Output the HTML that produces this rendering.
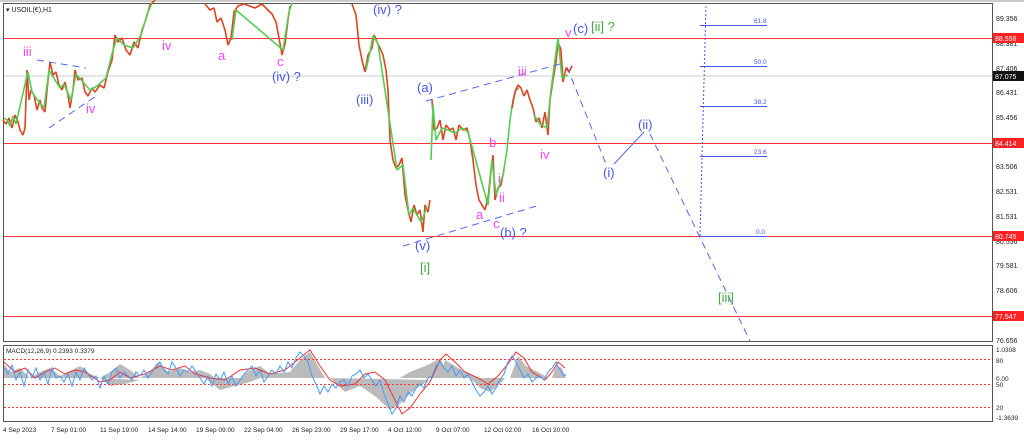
<!DOCTYPE html>
<html><head><meta charset="utf-8"><style>
html,body{margin:0;padding:0;background:#fff;width:1024px;height:441px;overflow:hidden}
svg{display:block;font-family:"Liberation Sans",sans-serif}
</style></head><body>
<svg width="1024" height="441" viewBox="0 0 1024 441">
<rect x="0" y="0" width="1024" height="441" fill="#fff"/>
<rect x="3.5" y="3.5" width="989" height="338" fill="#fff" stroke="#555" stroke-width="1"/>
<rect x="3.5" y="345.5" width="989" height="76" fill="#fff" stroke="#555" stroke-width="1"/>
<line x1="0" y1="1" x2="1024" y2="1" stroke="#999"/>
<line x1="4" y1="76" x2="992" y2="76" stroke="#ccc"/>
<g stroke="#f33" stroke-width="1">
<line x1="4" y1="38.5" x2="992" y2="38.5"/>
<line x1="4" y1="143.5" x2="992" y2="143.5"/>
<line x1="4" y1="236.5" x2="992" y2="236.5"/>
<line x1="4" y1="316.5" x2="992" y2="316.5"/>
</g>
<g stroke="#4455ee" stroke-width="1">
<line x1="700" y1="25.5" x2="767" y2="25.5"/>
<line x1="700" y1="66.5" x2="767" y2="66.5"/>
<line x1="700" y1="106.5" x2="767" y2="106.5"/>
<line x1="700" y1="156.5" x2="767" y2="156.5"/>
<line x1="700" y1="236.5" x2="767" y2="236.5"/>
<polyline points="700,236 706,4" fill="none" stroke-dasharray="2,2"/>
</g>
<g font-size="6.5" fill="#4455ee">
<text x="754" y="23">61.8</text><text x="754" y="64">50.0</text><text x="754" y="104">38.2</text><text x="754" y="154">23.6</text><text x="756" y="234">0.0</text>
</g>
<g fill="none" stroke-width="1.6" stroke-linejoin="bevel">
<polyline stroke="#d42" points="3,120 6,124 9,118 12,128 15,115 18,122 20,130 23,135 25,128 27,70 29,100 31,90 34,95 37,110 40,100 42,108 45,112 48,80 50,62 53,75 56,72 59,85 62,90 65,82 68,95 70,108 73,90 75,70 78,80 82,78 85,92 88,96 92,88 95,92 100,85 104,88 108,72 112,60 115,35 118,42 122,38 126,50 130,55 134,42 138,48 142,30 145,22 150,5 155,0"/>
<polyline stroke="#5c5" points="4,118 7,120 10,126 13,116 16,124 26,80 28,72 32,92 36,98 44,108 49,70 55,80 60,88 64,84 71,100 76,74 83,82 90,90 97,86 106,78 113,50 117,38 124,45 133,48 141,35 148,12 152,3"/>
<polyline stroke="#d42" points="205,4 210,10 214,8 217,22 221,18 225,30 228,45 231,38 234,12 238,6 244,4 255,8 262,4 268,10 272,14 276,22 279,38 282,55 285,44 288,20 290,6"/>
<polyline stroke="#5c5" points="232,40 236,10 283,50 289,12 292,3"/>
<polyline stroke="#d42" points="352,4 356,15 359,45 362,60 365,72 368,55 372,48 374,35 377,42 380,48 383,55 386,70 388,90 390,140 393,160 396,168 399,165 402,158 405,195 408,210 411,222 414,205 417,215 420,210 423,232 425,205 428,212 430,200"/>
<polyline stroke="#5c5" points="366,70 370,52 373,36 378,44 397,170 403,165 409,215 413,208 421,222 424,215 427,206"/>
<polyline stroke="#d42" points="432,100 434,130 437,128 440,120 443,140 446,125 450,130 453,128 456,140 459,125 463,130 467,128 470,140 473,160 476,185 479,200 482,205 485,210 488,198 491,170 493,155 495,200 498,188 501,185 504,170"/>
<polyline stroke="#5c5" points="431,160 433,105 436,140 442,128 448,130 455,133 462,128 468,132 488,205 492,160 496,195 503,175 507,150 510,120 513,100 516,90 519,88"/>
<polyline stroke="#d42" points="512,108 515,92 518,85 521,88 524,96 527,90 530,100 533,108 536,122 539,118 542,128 545,112 548,135 550,100 553,80 556,62 558,42 561,50 563,82 566,68 569,72 572,66"/>
<polyline stroke="#5c5" points="534,115 540,124 547,128 551,90 555,60 558,38 562,78 568,75"/>
</g>
<g stroke="#5566ee" stroke-width="1" fill="none" stroke-dasharray="7,5">
<line x1="37" y1="60" x2="86" y2="68"/>
<line x1="49" y1="128" x2="96" y2="96"/>
<line x1="426" y1="101" x2="560" y2="64"/>
<line x1="403" y1="246" x2="540" y2="205"/>
<polyline points="567,67 606,164"/>
<polyline points="614,164 644,132" stroke-dasharray="none"/>
<polyline points="650,134 750,341"/>
</g>
<g font-size="13">
<text x="23" y="56" fill="#f4f">iii</text>
<text x="86" y="113" fill="#f4f">iv</text>
<text x="162" y="50" fill="#f4f">iv</text>
<text x="218" y="60" fill="#f4f">a</text>
<text x="277" y="66" fill="#f4f">c</text>
<text x="272" y="81" fill="#4455ee">(iv) ?</text>
<text x="373" y="14" fill="#4455ee">(iv) ?</text>
<text x="356" y="104" fill="#4455ee">(iii)</text>
<text x="417" y="92" fill="#4455ee">(a)</text>
<text x="518" y="76" fill="#f4f">iii</text>
<text x="489" y="147" fill="#f4f">b</text>
<text x="498" y="183" fill="#f4f">i</text>
<text x="499" y="202" fill="#f4f">ii</text>
<text x="476" y="219" fill="#f4f">a</text>
<text x="493" y="228" fill="#f4f">c</text>
<text x="500" y="237" fill="#4455ee">(b) ?</text>
<text x="415" y="250" fill="#4455ee">(v)</text>
<text x="420" y="272" fill="#4a4">[i]</text>
<text x="540" y="159" fill="#f4f">iv</text>
<text x="565" y="37" fill="#f4f">v</text>
<text x="573" y="33" fill="#4455ee">(c)</text>
<text x="591" y="31" fill="#4a4">[ii] ?</text>
<text x="603" y="177" fill="#4455ee">(i)</text>
<text x="638" y="129" fill="#4455ee">(ii)</text>
<text x="718" y="302" fill="#4a4">[iii]</text>
</g>
<text x="6" y="12" font-size="7" fill="#222">▾ USOIL(€),H1</text>
<g font-size="7" fill="#222">
<text x="996" y="21">89.356</text><text x="996" y="46">88.381</text><text x="996" y="71">87.406</text><text x="996" y="95">86.431</text><text x="996" y="120">85.456</text><text x="996" y="169">83.506</text><text x="996" y="194">82.531</text><text x="996" y="219">81.531</text><text x="996" y="244">80.556</text><text x="996" y="268">79.581</text><text x="996" y="293">78.606</text><text x="996" y="343">76.656</text>
</g>
<rect x="993" y="33" width="31" height="10" fill="#f22"/><text x="995" y="41" font-size="7" fill="#fff">88.558</text>
<rect x="993" y="71" width="31" height="10" fill="#111"/><text x="995" y="79" font-size="7" fill="#fff">87.075</text>
<rect x="993" y="138" width="31" height="10" fill="#f22"/><text x="995" y="146" font-size="7" fill="#fff">84.414</text>
<rect x="993" y="231" width="31" height="10" fill="#f22"/><text x="995" y="239" font-size="7" fill="#fff">80.745</text>
<rect x="993" y="311" width="31" height="10" fill="#f22"/><text x="995" y="319" font-size="7" fill="#fff">77.547</text>
<path d="M4,378 L4,364 L10,372 L20,368 L30,378 L40,372 L50,368 L60,376 L70,371 L80,366 L90,374 L100,378 L110,372 L120,364 L130,370 L140,378 L150,372 L158,362 L168,372 L180,368 L190,372 L200,370 L210,374 L215,378 Z M240,378 L250,370 L260,366 L270,374 L290,372 L300,360 L310,352 L318,366 L325,378 Z M400,378 L410,372 L420,368 L430,364 L440,358 L448,374 L455,378 Z M440,378 L445,360 L455,366 L465,372 L478,378 Z M510,378 L518,356 L526,366 L538,372 L548,378 Z M552,378 L556,366 L562,368 L566,378 Z" fill="#bbb"/>
<path d="M100,378 L110,386 L125,384 L140,380 Z M205,378 L220,390 L235,386 L250,382 L260,378 Z M330,378 L345,392 L360,386 L375,396 L390,410 L400,404 L410,394 L420,386 L430,380 Z M470,378 L480,388 L490,392 L500,384 L505,378 Z" fill="#bbb"/>
<g stroke="#f33" stroke-dasharray="2,2" stroke-width="1">
<line x1="4" y1="359.5" x2="992" y2="359.5"/><line x1="4" y1="384.5" x2="992" y2="384.5"/><line x1="4" y1="407.5" x2="992" y2="407.5"/>
</g>
<polyline fill="none" stroke="#e33" stroke-width="1" points="4,362 15,372 25,368 35,378 45,372 55,368 65,374 75,370 85,372 100,382 110,380 120,372 130,378 145,374 160,366 172,370 185,366 195,374 210,378 225,380 240,370 255,368 270,374 285,370 300,358 310,350 320,366 330,380 340,386 355,384 365,374 375,372 385,380 395,400 402,414 410,408 420,394 430,382 440,360 446,354 455,362 465,372 478,378 488,384 498,376 508,364 516,352 524,358 532,372 545,380 552,372 558,362 565,368"/>
<polyline fill="none" stroke="#49f" stroke-width="1" points="4,368 8,374 12,365 16,380 20,372 24,386 28,370 32,378 36,368 40,380 44,372 48,384 52,368 56,378 60,376 64,382 68,374 72,386 76,372 80,380 84,368 88,374 92,380 96,376 100,388 104,376 108,384 112,372 116,368 120,378 124,372 128,376 132,380 136,372 140,376 144,370 148,378 152,372 156,366 160,362 164,370 168,374 172,362 176,368 180,376 184,370 188,372 192,366 196,372 200,378 204,384 208,376 212,386 216,374 220,380 224,372 228,384 232,376 236,386 240,380 244,374 248,370 252,366 256,376 260,370 264,382 268,376 272,370 276,374 280,366 284,372 288,362 292,368 296,358 300,352 304,356 308,362 312,376 316,384 320,394 324,386 328,392 332,384 336,388 340,382 344,380 348,386 352,376 356,374 360,370 364,378 368,374 372,380 376,386 380,380 384,394 388,404 392,414 396,408 400,396 404,402 408,392 412,396 416,388 420,384 424,388 428,378 432,376 436,366 440,362 444,368 448,372 452,366 456,376 460,370 464,378 468,374 472,382 476,390 480,396 484,392 488,386 492,394 496,388 500,380 504,374 508,362 512,356 516,362 520,370 524,378 528,374 532,382 536,378 540,376 544,380 548,372 552,368 556,362 560,370 564,376 566,374"/>
<text x="6" y="353" font-size="6.5" fill="#222">MACD(12,26,9) 0.2393 0.3379</text>
<g font-size="6.5" fill="#222">
<text x="996" y="352">1.0308</text><text x="996" y="363">80</text><text x="996" y="381">0.00</text><text x="996" y="387">50</text><text x="996" y="410">20</text><text x="996" y="420">-1.3639</text>
</g>
<g font-size="6.5" fill="#222">
<text x="3" y="432">4 Sep 2023</text><text x="51" y="432">7 Sep 01:00</text><text x="100" y="432">11 Sep 19:00</text><text x="148" y="432">14 Sep 14:00</text><text x="196" y="432">19 Sep 09:00</text><text x="244" y="432">22 Sep 04:00</text><text x="292" y="432">26 Sep 23:00</text><text x="340" y="432">29 Sep 17:00</text><text x="388" y="432">4 Oct 12:00</text><text x="436" y="432">9 Oct 07:00</text><text x="484" y="432">12 Oct 02:00</text><text x="532" y="432">16 Oct 20:00</text>
</g>
</svg>
</body></html>
